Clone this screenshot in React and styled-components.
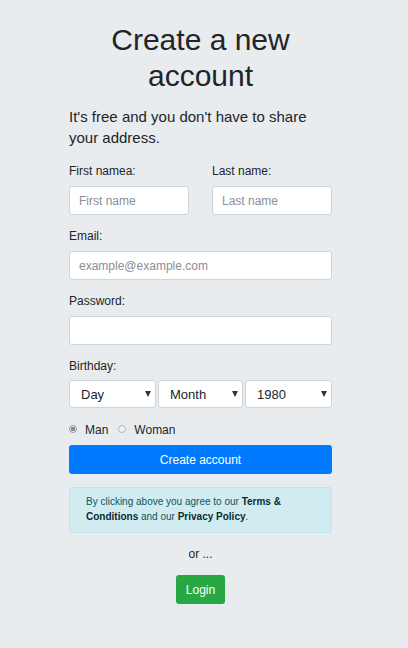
import { createGlobalStyle, styled } from "styled-components";

const GlobalStyle = createGlobalStyle`
  html, body {
    margin: 0;
    padding: 0;
    background: #e9ecef;
  }
  body {
    font-family: "Liberation Sans", Arial, sans-serif;
    color: #212529;
  }
  * {
    box-sizing: border-box;
  }
`;

const Page = styled.div`
  display: flex;
  justify-content: center;
  padding: 22px 7px 40px 0;
  min-height: 648px;
`;

const Container = styled.form`
  width: 263px;
  display: flex;
  flex-direction: column;
`;

const Title = styled.h1`
  margin: 0 0 12px;
  font-size: 30px;
  line-height: 36px;
  font-weight: 400;
  text-align: center;
`;

const Lead = styled.p`
  margin: 0 0 14px;
  font-size: 15px;
  line-height: 21px;
`;

const Row = styled.div`
  display: grid;
  grid-template-columns: 1fr 1fr;
  column-gap: 23px;
`;

const Group = styled.div`
  display: flex;
  flex-direction: column;
  margin-bottom: 12px;
`;

const Label = styled.label`
  font-size: 12px;
  line-height: 18px;
  margin-bottom: ${(p) => (p.$tight ? "5px" : "6px")};
`;

const Input = styled.input`
  height: 29px;
  width: 100%;
  padding: 0 9px;
  font-family: inherit;
  font-size: 12px;
  color: #495057;
  background: #fff;
  border: 1px solid #ced4da;
  border-radius: 3px;
  outline: none;
  &::placeholder {
    color: #8a8f94;
  }
`;

const Selects = styled.div`
  display: grid;
  grid-template-columns: 87px 1fr 87px;
  column-gap: 2px;
`;

const SelectWrap = styled.div`
  position: relative;
  &::after {
    content: "";
    position: absolute;
    right: 5px;
    top: 11px;
    border-left: 3px solid transparent;
    border-right: 3px solid transparent;
    border-top: 6px solid #333;
    pointer-events: none;
  }
`;

const Select = styled.select`
  appearance: none;
  width: 100%;
  height: 28px;
  padding: 0 11px;
  font-family: inherit;
  font-size: 13px;
  color: #212529;
  background: #fff;
  border: 1px solid #ced4da;
  border-radius: 3px;
  outline: none;
`;

const Radios = styled.div`
  display: flex;
  align-items: center;
  gap: 10px;
  height: 18px;
  margin-top: 1px;
  margin-bottom: 6px;
  font-size: 12px;
`;

const RadioLabel = styled.label`
  display: flex;
  align-items: center;
  gap: 8px;
`;

const Radio = styled.input`
  appearance: none;
  margin: 0;
  width: 8px;
  height: 8px;
  border-radius: 50%;
  border: 1px solid #b5b5b5;
  background: #f1f1f1;
  position: relative;
  top: -1px;
  &:checked {
    border-color: #9a9a9a;
    background: radial-gradient(circle, #8a8a8a 0 2px, #ececec 2.5px);
  }
`;

const Button = styled.button`
  border: none;
  border-radius: 3px;
  color: #fff;
  font-family: inherit;
  font-size: 12px;
  height: 29px;
  background: ${(p) => (p.$variant === "success" ? "#28a745" : "#007bff")};
  padding: 0 10px;
  cursor: pointer;
`;

const Notice = styled.div`
  margin-top: 13px;
  padding: 6px 16px 8px;
  background: #d1ecf1;
  border: 1px solid #bee5eb;
  border-radius: 3px;
  color: #0c5460;
  font-size: 10px;
  line-height: 15px;
  b {
    color: #062c33;
  }
`;

const Or = styled.p`
  margin: 12px 0 12px;
  text-align: center;
  font-size: 12px;
  line-height: 18px;
`;

const Center = styled.div`
  display: flex;
  justify-content: center;
`;

const App = () => {
  return (
    <>
      <GlobalStyle />
      <Page>
        <Container onSubmit={(e) => e.preventDefault()}>
          <Title>Create a new account</Title>
          <Lead>It's free and you don't have to share your address.</Lead>
          <Row>
            <Group>
              <Label>First namea:</Label>
              <Input placeholder="First name" />
            </Group>
            <Group>
              <Label>Last name:</Label>
              <Input placeholder="Last name" />
            </Group>
          </Row>
          <Group>
            <Label>Email:</Label>
            <Input placeholder="example@example.com" />
          </Group>
          <Group>
            <Label>Password:</Label>
            <Input type="password" />
          </Group>
          <Group>
            <Label $tight>Birthday:</Label>
            <Selects>
              <SelectWrap>
                <Select defaultValue="">
                  <option value="">Day</option>
                </Select>
              </SelectWrap>
              <SelectWrap>
                <Select defaultValue="">
                  <option value="">Month</option>
                </Select>
              </SelectWrap>
              <SelectWrap>
                <Select defaultValue="1980">
                  <option value="1980">1980</option>
                </Select>
              </SelectWrap>
            </Selects>
          </Group>
          <Radios>
            <RadioLabel>
              <Radio type="radio" name="gender" defaultChecked />
              Man
            </RadioLabel>
            <RadioLabel>
              <Radio type="radio" name="gender" />
              Woman
            </RadioLabel>
          </Radios>
          <Button type="submit">Create account</Button>
          <Notice>
            By clicking above you agree to our <b>Terms &amp; Conditions</b> and
            our <b>Privacy Policy</b>.
          </Notice>
          <Or>or ...</Or>
          <Center>
            <Button type="button" $variant="success">
              Login
            </Button>
          </Center>
        </Container>
      </Page>
    </>
  );
};

export default App;
